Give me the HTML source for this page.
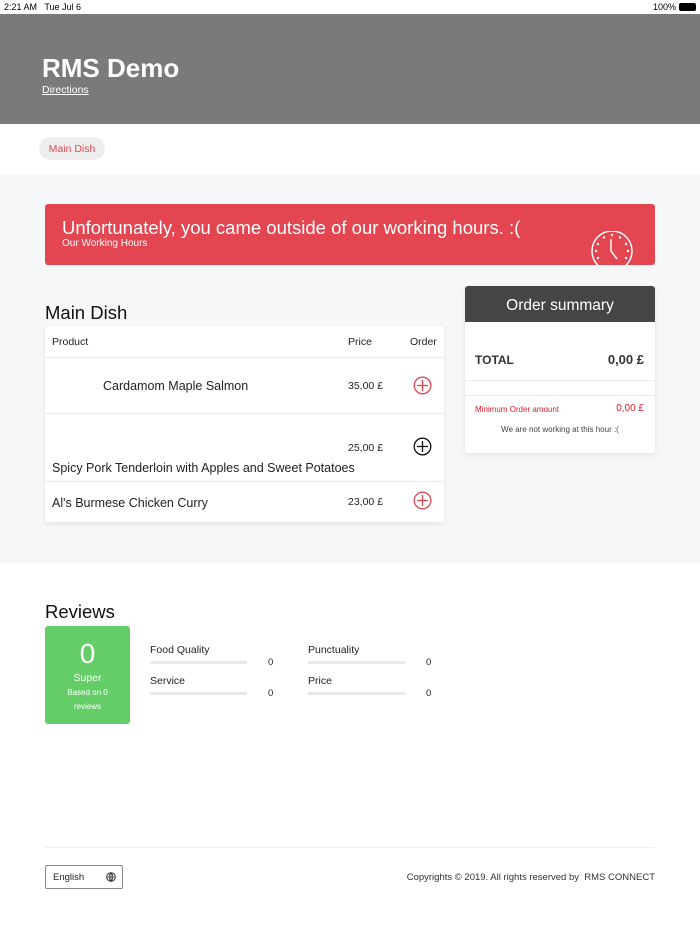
<!DOCTYPE html>
<html><head><meta charset="utf-8"><style>
*{margin:0;padding:0;box-sizing:border-box}
body{width:700px;height:934px;background:#fff;font-family:"Liberation Sans",sans-serif;color:#222;position:relative;overflow:hidden}
.abs{position:absolute}
.status{top:0;left:0;width:700px;height:14px;font-size:9px;color:#000}
.hdr{top:14px;left:0;width:700px;height:110px;background:#7a7a7a}
.nav{top:124px;left:0;width:700px;height:50px;background:#fff;box-shadow:0 2px 4px rgba(0,0,0,.06)}
.gray{top:174px;left:0;width:700px;height:389px;background:#f6f7f9}
.banner{top:204px;left:45px;width:610px;height:61px;background:#e34651;border-radius:3px;color:#fff;overflow:hidden}
.card{background:#fff;box-shadow:0 2px 6px rgba(0,0,0,.08);border-radius:3px}
.row{position:absolute;left:0;width:399px;border-top:1px solid #ebebeb}
.plus{position:absolute}
.bar{position:absolute;height:3px;width:97px;background:#e8e8ea;border-radius:2px}
</style></head><body>
<div class="abs status"><span style="position:absolute;left:4px;top:2px">2:21 AM&nbsp;&nbsp; Tue Jul 6</span><span style="position:absolute;right:24px;top:2px">100%</span><span style="position:absolute;right:4px;top:3px;width:17px;height:8px;background:#000;border-radius:2px"></span></div>
<div class="abs hdr"><div style="position:absolute;left:42px;top:39px;font-size:26px;font-weight:bold;color:#fff">RMS Demo</div><div style="position:absolute;left:42px;top:70px;font-size:10.5px;color:#fff;text-decoration:underline">Directions</div></div>
<div class="abs nav"><div style="position:absolute;left:39px;top:13px;width:66px;height:23px;background:#eee;border-radius:12px;color:#e34651;font-size:10.5px;text-align:center;line-height:24px">Main Dish</div></div>
<div class="abs gray"></div>
<div class="abs banner"><div style="position:absolute;left:17px;top:13px;font-size:18.5px">Unfortunately, you came outside of our working hours. :(</div><div style="position:absolute;left:17px;top:34px;font-size:10px">Our Working Hours</div>
<svg style="position:absolute;left:545px;top:27px" width="45" height="45" viewBox="0 0 45 45"><circle cx="22" cy="20" r="20" fill="none" stroke="#fff" stroke-width="1.5"/><path d="M21 8v12l6 8" fill="none" stroke="#fff" stroke-width="1.5"/><g fill="#fff"><circle cx="22" cy="4" r="1.2"/><circle cx="30" cy="6.5" r="1.2"/><circle cx="36" cy="13" r="1.2"/><circle cx="38" cy="20" r="1.2"/><circle cx="14" cy="6.5" r="1.2"/><circle cx="8" cy="13" r="1.2"/><circle cx="6" cy="20" r="1.2"/><circle cx="8" cy="27" r="1.2"/><circle cx="36" cy="27" r="1.2"/></g></svg></div>
<div class="abs" style="left:45px;top:302px;font-size:18.5px;color:#111">Main Dish</div>
<div class="abs card" style="left:45px;top:326px;width:399px;height:196px;font-size:10.5px">
<div style="position:absolute;left:7px;top:10px">Product</div><div style="position:absolute;left:303px;top:10px">Price</div><div style="position:absolute;left:365px;top:10px">Order</div>
<div class="row" style="top:31px;height:56px"><div style="position:absolute;left:58px;top:21px;font-size:12.5px">Cardamom Maple Salmon</div><div style="position:absolute;left:303px;top:22px">35,00 £</div><svg class="plus" style="left:368px;top:18px" width="19" height="19" viewBox="0 0 19 19"><circle cx="9.5" cy="9.5" r="8.3" fill="none" stroke="#e34651" stroke-width="1.3"/><path d="M9.5 4v11M4 9.5h11" stroke="#e34651" stroke-width="1.3"/></svg></div>
<div class="row" style="top:87px;height:68px"><div style="position:absolute;left:7px;top:47px;font-size:12.5px">Spicy Pork Tenderloin with Apples and Sweet Potatoes</div><div style="position:absolute;left:303px;top:28px">25,00 £</div><svg class="plus" style="left:368px;top:23px" width="19" height="19" viewBox="0 0 19 19"><circle cx="9.5" cy="9.5" r="8.3" fill="none" stroke="#111" stroke-width="1.3"/><path d="M9.5 4v11M4 9.5h11" stroke="#111" stroke-width="1.3"/></svg></div>
<div class="row" style="top:155px;height:41px"><div style="position:absolute;left:7px;top:14px;font-size:12.5px">Al's Burmese Chicken Curry</div><div style="position:absolute;left:303px;top:14px">23,00 £</div><svg class="plus" style="left:368px;top:9px" width="19" height="19" viewBox="0 0 19 19"><circle cx="9.5" cy="9.5" r="8.3" fill="none" stroke="#e34651" stroke-width="1.3"/><path d="M9.5 4v11M4 9.5h11" stroke="#e34651" stroke-width="1.3"/></svg></div>
</div>
<div class="abs card" style="left:465px;top:286px;width:190px;height:167px">
<div style="height:36px;background:#454545;color:#fff;font-size:15.5px;text-align:center;line-height:40px;border-radius:3px 3px 0 0">Order summary</div>
<div style="position:absolute;left:10px;top:67px;font-size:12px;font-weight:bold;color:#333">TOTAL</div><div style="position:absolute;right:11px;top:66px;font-size:13px;font-weight:bold;color:#333">0,00 £</div>
<div style="position:absolute;left:0;right:0;top:94px;border-top:1px solid #eee"></div><div style="position:absolute;left:0;right:0;top:109px;border-top:1px solid #eee"></div>
<div style="position:absolute;left:10px;top:119px;font-size:8px;color:#e0202f">Minimum Order amount</div><div style="position:absolute;right:11px;top:117px;font-size:10px;color:#e0202f">0,00 £</div>
<div style="position:absolute;left:0;right:0;top:139px;font-size:8px;color:#444;text-align:center">We are not working at this hour :(</div></div>
<div class="abs" style="left:45px;top:601px;font-size:18.5px;color:#111">Reviews</div>
<div class="abs" style="left:45px;top:626px;width:85px;height:98px;background:#65cd67;border-radius:3px;color:#fff;text-align:center"><div style="font-size:28px;margin-top:12px;line-height:32px">0</div><div style="font-size:10.5px;margin-top:2px">Super</div><div style="font-size:8px;line-height:14px;margin-top:2px">Based on 0<br>reviews</div></div>
<div class="abs" style="left:150px;top:644px;font-size:10.5px">Food Quality</div><div class="bar" style="left:150px;top:661px"></div><div class="abs" style="left:268px;top:657px;font-size:9.5px">0</div>
<div class="abs" style="left:150px;top:675px;font-size:10.5px">Service</div><div class="bar" style="left:150px;top:692px"></div><div class="abs" style="left:268px;top:688px;font-size:9.5px">0</div>
<div class="abs" style="left:308px;top:644px;font-size:10.5px">Punctuality</div><div class="bar" style="left:308px;top:661px"></div><div class="abs" style="left:426px;top:657px;font-size:9.5px">0</div>
<div class="abs" style="left:308px;top:675px;font-size:10.5px">Price</div><div class="bar" style="left:308px;top:692px"></div><div class="abs" style="left:426px;top:688px;font-size:9.5px">0</div>
<div class="abs" style="left:45px;top:847px;width:610px;border-top:1px solid #eee"></div>
<div class="abs" style="left:45px;top:865px;width:78px;height:24px;border:1px solid #888;border-radius:2px;font-size:9.5px;line-height:23px;padding-left:7px">English<svg style="position:absolute;right:6px;top:6px" width="10" height="10" viewBox="0 0 10 10"><circle cx="5" cy="5" r="4.3" fill="none" stroke="#333"/><path d="M1 5h8M5 .7v8.6M5 .7c-2.4 2.6-2.4 6 0 8.6M5 .7c2.4 2.6 2.4 6 0 8.6" fill="none" stroke="#333" stroke-width=".8"/></svg></div>
<div class="abs" style="right:45px;top:872px;font-size:9.5px;color:#333">Copyrights © 2019. All rights reserved by&nbsp; RMS CONNECT</div>
</body></html>
